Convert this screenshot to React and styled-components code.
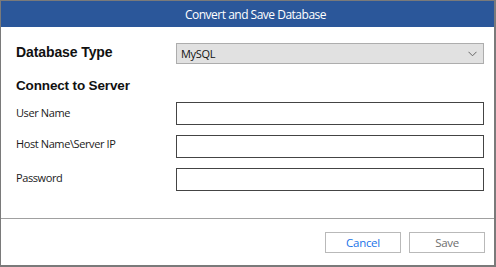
import React from 'react';
import styled, { createGlobalStyle } from 'styled-components';

const GlobalStyle = createGlobalStyle`
    html, body {
        margin: 0;
        padding: 0;
        background: #ffffff;
    }
    body {
        font-family: "Open Sans", "Noto Sans", sans-serif;
    }
`;

const Window = styled.div`
    box-sizing: border-box;
    width: 496px;
    height: 267px;
    display: flex;
    flex-direction: column;
    border-top: 1px solid #7a7a7a;
    border-left: 1px solid #7a7a7a;
    border-right: 2px solid #7a7a7a;
    border-bottom: 2px solid #7a7a7a;
    background: #ffffff;
`;

const TitleBar = styled.div`
    height: 26px;
    flex: none;
    background: #2b579a;
    color: #ffffff;
    font-size: 12px;
    letter-spacing: -0.5px;
    display: flex;
    align-items: center;
    justify-content: center;
    padding-left: 16px;
`;

const Body = styled.div`
    flex: 1;
    padding: 16px 10px 0 15px;
    display: flex;
    flex-direction: column;
`;

const TypeRow = styled.div`
    display: grid;
    grid-template-columns: 160px 308px;
    align-items: center;
    height: 21px;
`;

const Heading = styled.div`
    font-family: "Liberation Sans", Arial, sans-serif;
    font-weight: bold;
    font-size: ${(p) => p.size}px;
    letter-spacing: ${(p) => p.spacing}px;
    color: #111111;
`;

const TypeHeading = styled(Heading)`
    margin-top: -3px;
`;

const Select = styled.div`
    box-sizing: border-box;
    height: 21px;
    background: #e1e1e1;
    border: 1px solid #adadad;
    display: flex;
    align-items: center;
    justify-content: space-between;
    padding: 0 6px 0 4px;
    font-size: 11px;
    letter-spacing: -0.3px;
    color: #111111;
`;

const SectionTitle = styled(Heading)`
    margin-top: 14px;
`;

const Fields = styled.div`
    margin-top: 9px;
    display: flex;
    flex-direction: column;
    gap: 10px;
`;

const FieldRow = styled.div`
    display: grid;
    grid-template-columns: 160px 308px;
    align-items: start;
`;

const Label = styled.div`
    font-size: 11px;
    letter-spacing: -0.4px;
    color: #1a1a1a;
    padding-top: ${(p) => p.offset}px;
`;

const Input = styled.div`
    box-sizing: border-box;
    height: 23px;
    border: 1px solid #444444;
    background: #ffffff;
`;

const Footer = styled.div`
    flex: none;
    height: 47px;
    border-top: 1px solid #a0a0a0;
    display: flex;
    justify-content: flex-end;
    align-items: flex-start;
    gap: 8px;
    padding: 13px 9px 0 0;
    box-sizing: border-box;
`;

const Button = styled.button`
    box-sizing: border-box;
    width: 76px;
    height: 21px;
    background: #ffffff;
    border: 1px solid #b9b9b9;
    font-family: "Open Sans", "Noto Sans", sans-serif;
    font-size: 11.5px;
    letter-spacing: -0.3px;
    color: ${(p) => (p.primary ? '#1a73e8' : '#6e6e6e')};
    padding: 0;
`;

const Chevron = () => (
    <svg width="9" height="6" viewBox="0 0 9 6">
        <path d="M0.5 0.8 L4.5 4.8 L8.5 0.8" fill="none" stroke="#666" strokeWidth="1" />
    </svg>
);

const fields = [
    { label: 'User Name', offset: 3 },
    { label: 'Host Name\\Server IP', offset: 1 },
    { label: 'Password', offset: 2 },
];

const App = () => (
    <Window>
        <GlobalStyle />
        <TitleBar>Convert and Save Database</TitleBar>
        <Body>
            <TypeRow>
                <TypeHeading size={14} spacing={-0.1}>Database Type</TypeHeading>
                <Select>
                    <span>MySQL</span>
                    <Chevron />
                </Select>
            </TypeRow>
            <SectionTitle size={13.5} spacing={-0.15}>Connect to Server</SectionTitle>
            <Fields>
                {fields.map((f) => (
                    <FieldRow key={f.label}>
                        <Label offset={f.offset}>{f.label}</Label>
                        <Input />
                    </FieldRow>
                ))}
            </Fields>
        </Body>
        <Footer>
            <Button primary>Cancel</Button>
            <Button>Save</Button>
        </Footer>
    </Window>
);

export default App;
